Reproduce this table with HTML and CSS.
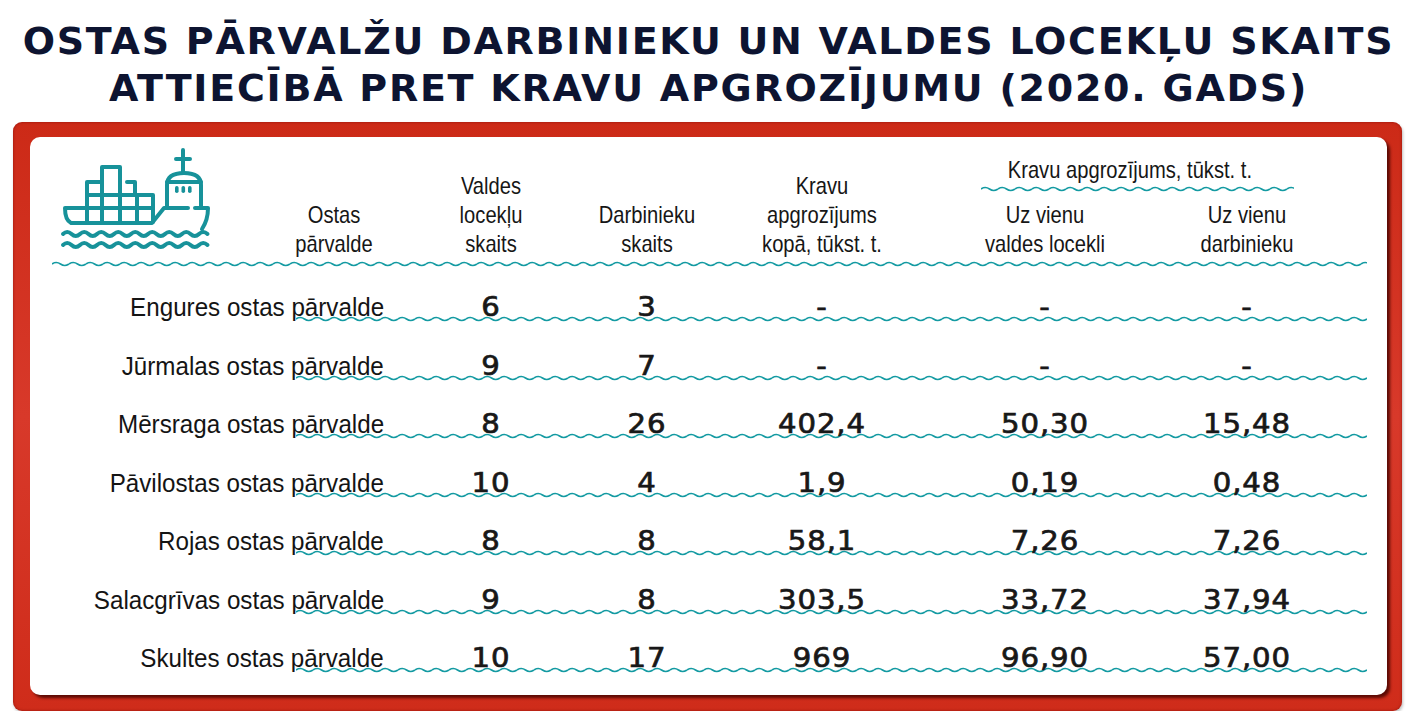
FILE: index.html
```html
<!DOCTYPE html>
<html lang="lv">
<head>
<meta charset="utf-8">
<title>Ostas pārvalžu darbinieku un valdes locekļu skaits</title>
<link rel="stylesheet" href="styles.css">
</head>
<body>
<h1 class="title"><span>OSTAS PĀRVALŽU DARBINIEKU UN VALDES LOCEKĻU SKAITS</span><span>ATTIECĪBĀ PRET KRAVU APGROZĪJUMU (2020. GADS)</span></h1>
<div class="frame">
  <div class="panel">
    <div class="head">
      <div class="h-port">
        <svg class="ship" viewBox="0 0 170 110" width="170" height="110" fill="none" stroke="#17929a" stroke-width="4" stroke-linecap="round" stroke-linejoin="round">
          <path d="M128 5V27M121 14H135"/>
          <path d="M112 62V40Q112 28 129 28Q146 28 146 40V62"/>
          <path d="M112 37H146"/>
          <g fill="#17929a" stroke="none">
            <rect x="120" y="41" width="3.6" height="7" rx="1.8"/>
            <rect x="126.5" y="41" width="3.6" height="7" rx="1.8"/>
            <rect x="133" y="41" width="3.6" height="7" rx="1.8"/>
          </g>
          <path d="M32 77V37H47V22H65V77M47 37V77M32 50H98M32 63H98M65 50H98V77M82 50V77M72 37H80V50"/>
          <path d="M10 63H31M10 63Q10 75 16 78H97L109 63H133M140 63H153Q153 75 147 84"/>
          <path d="M8 89q4.25 -4 8.5 0t8.5 0t8.5 0t8.5 0t8.5 0t8.5 0t8.5 0t8.5 0t8.5 0t8.5 0t8.5 0t8.5 0t8.5 0t8.5 0t8.5 0t8.5 0t8.5 0"/>
          <path d="M8 100q4.25 -4 8.5 0t8.5 0t8.5 0t8.5 0t8.5 0t8.5 0t8.5 0t8.5 0t8.5 0t8.5 0t8.5 0t8.5 0t8.5 0t8.5 0t8.5 0t8.5 0t8.5 0"/>
        </svg>
        <div class="h-text cond">Ostas<br>pārvalde</div>
      </div>
      <div class="h-col cond">Valdes<br>locekļu<br>skaits</div>
      <div class="h-col cond">Darbinieku<br>skaits</div>
      <div class="h-col cond">Kravu<br>apgrozījums<br>kopā, tūkst. t.</div>
      <div class="h-group">
        <div class="g-title cond">Kravu apgrozījums, tūkst. t.</div>
        <div class="wave g-wave"></div>
        <div class="g-sub">
          <div class="h-col cond">Uz vienu<br>valdes locekli</div>
          <div class="h-col cond">Uz vienu<br>darbinieku</div>
        </div>
      </div>
    </div>
    <div class="wave head-wave"></div>
    <div class="rows">
      <div class="row"><div class="label"><span>Engures ostas pārvalde</span></div><div class="num n1">6</div><div class="num n2">3</div><div class="num n3">-</div><div class="num n4">-</div><div class="num n5">-</div><div class="wave row-wave"></div></div>
      <div class="row"><div class="label"><span>Jūrmalas ostas pārvalde</span></div><div class="num n1">9</div><div class="num n2">7</div><div class="num n3">-</div><div class="num n4">-</div><div class="num n5">-</div><div class="wave row-wave"></div></div>
      <div class="row"><div class="label"><span>Mērsraga ostas pārvalde</span></div><div class="num n1">8</div><div class="num n2">26</div><div class="num n3">402,4</div><div class="num n4">50,30</div><div class="num n5">15,48</div><div class="wave row-wave"></div></div>
      <div class="row"><div class="label"><span>Pāvilostas ostas pārvalde</span></div><div class="num n1">10</div><div class="num n2">4</div><div class="num n3">1,9</div><div class="num n4">0,19</div><div class="num n5">0,48</div><div class="wave row-wave"></div></div>
      <div class="row"><div class="label"><span>Rojas ostas pārvalde</span></div><div class="num n1">8</div><div class="num n2">8</div><div class="num n3">58,1</div><div class="num n4">7,26</div><div class="num n5">7,26</div><div class="wave row-wave"></div></div>
      <div class="row"><div class="label"><span>Salacgrīvas ostas pārvalde</span></div><div class="num n1">9</div><div class="num n2">8</div><div class="num n3">303,5</div><div class="num n4">33,72</div><div class="num n5">37,94</div><div class="wave row-wave"></div></div>
      <div class="row"><div class="label"><span>Skultes ostas pārvalde</span></div><div class="num n1">10</div><div class="num n2">17</div><div class="num n3">969</div><div class="num n4">96,90</div><div class="num n5">57,00</div><div class="wave row-wave"></div></div>
    </div>
  </div>
</div>
</body>
</html>
```

FILE: styles.css
```css
html, body {
  margin: 0;
  padding: 0;
  background: #ffffff;
}

body {
  font-family: "Liberation Sans", Arial, sans-serif;
  color: #141414;
}

.title {
  margin: 0;
  padding-top: 18px;
  font-family: "DejaVu Sans", "Liberation Sans", sans-serif;
  font-weight: bold;
  font-size: 38px;
  line-height: 47px;
  letter-spacing: 1.75px;
  text-align: center;
  color: #0d1431;
}

.title span {
  display: block;
}

.frame {
  margin: 10px 15px 0 13px;
  padding: 15px 15px 16px 17px;
  border-radius: 9px;
  background: linear-gradient(180deg, #cc2a17 0%, #d8392a 50%, #cf2c1a 100%);
  box-shadow: inset 0 0 3px rgba(110, 0, 0, 0.6), 1px 2px 3px rgba(0, 0, 0, 0.25);
}

.panel {
  height: 558px;
  background: #ffffff;
  border-radius: 10px;
  box-shadow: 3px 3px 3px rgba(70, 5, 0, 0.85);
}

.head,
.row {
  display: grid;
  grid-template-columns: 266px 114px 162px 150px 200px 246px 158px 41px;
}

.head {
  height: 121px;
  align-items: end;
  font-size: 24px;
  line-height: 29px;
  color: #161616;
}

/* condensed look of the header lettering */
.cond {
  transform: scaleX(0.84);
}

.h-port {
  grid-column: 1 / 3;
  display: flex;
  align-items: flex-end;
  padding-left: 25px;
  padding-right: 30px;
  align-self: stretch;
}

.ship {
  display: block;
  flex: none;
  margin-bottom: 3px;
}

.h-text {
  margin-left: auto;
  text-align: center;
}

.h-col {
  text-align: center;
}

.h-group {
  grid-column: 6 / 8;
}

.g-title {
  padding-left: 14px;
  text-align: center;
}

.g-wave {
  margin: 2px 0 8px 59px;
  width: 313px;
}

.g-sub {
  display: grid;
  grid-template-columns: 246px 158px;
}

.wave {
  height: 6px;
  background-image: url("data:image/svg+xml,%3Csvg xmlns='http://www.w3.org/2000/svg' width='17' height='6' viewBox='0 0 17 6'%3E%3Cpath d='M0 3 Q4.25 0 8.5 3 T17 3' fill='none' stroke='%23139aa2' stroke-width='1.6'/%3E%3C/svg%3E");
  background-repeat: repeat-x;
  background-size: 17px 6px;
}

.head-wave {
  margin: 3px 20px 0 22px;
}

.rows {
  margin-top: -3.5px;
}

.row {
  height: 58.5px;
  align-items: end;
  line-height: 30px;
}

.label {
  grid-column: 1 / 3;
  grid-row: 1;
  padding-right: 26px;
  text-align: right;
  font-size: 26px;
  white-space: nowrap;
  color: #141414;
}

.label span {
  display: inline-block;
  transform: scaleX(0.93);
  transform-origin: right center;
}

.num {
  grid-row: 1;
  text-align: center;
  font-family: "DejaVu Sans", "Liberation Sans", sans-serif;
  font-size: 26px;
  letter-spacing: 0.8px;
  color: #181818;
  -webkit-text-stroke: 0.7px #181818;
  transform: scaleX(1.12);
}

.n1 { grid-column: 3; }
.n2 { grid-column: 4; }
.n3 { grid-column: 5; }
.n4 { grid-column: 6; }
.n5 { grid-column: 7; }

.row-wave {
  grid-column: 2 / 9;
  grid-row: 1;
  align-self: end;
}
```
